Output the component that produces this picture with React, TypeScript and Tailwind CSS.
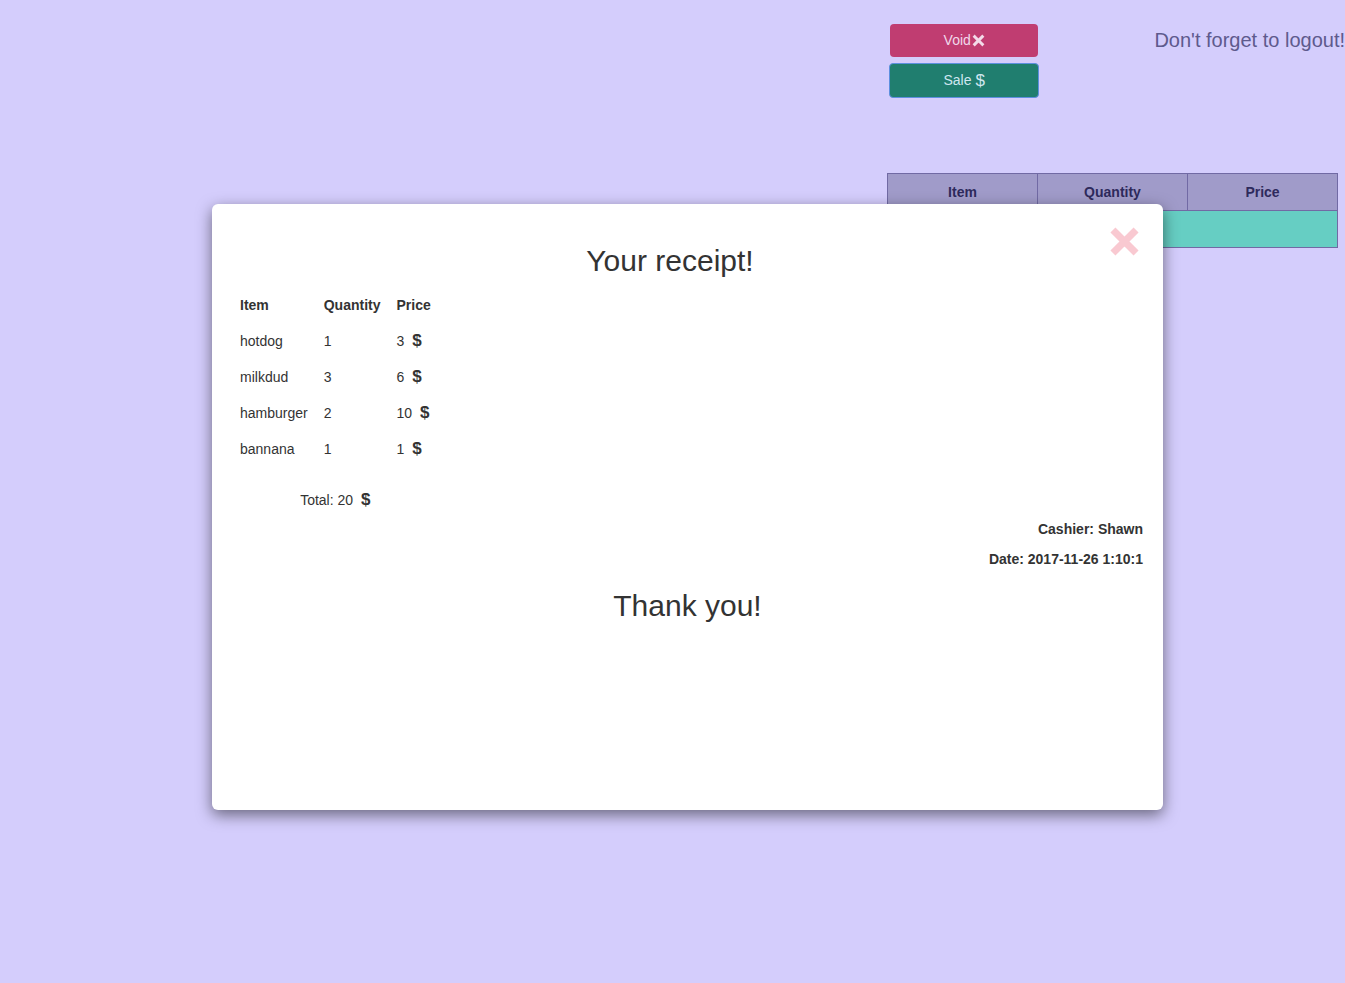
import React from 'react';

const items = [
  { name: 'hotdog', qty: 1, price: 3 },
  { name: 'milkdud', qty: 3, price: 6 },
  { name: 'hamburger', qty: 2, price: 10 },
  { name: 'bannana', qty: 1, price: 1 },
];

const Cross: React.FC<{ className?: string }> = ({ className }) => (
  <svg viewBox="0 0 24 24" className={className} fill="none">
    <path d="M5 5 L19 19 M19 5 L5 19" stroke="currentColor" strokeWidth="5.5" strokeLinecap="square" />
  </svg>
);

const Dollar: React.FC = () => (
  <span className="ml-[8px] inline-block text-[17px] leading-none font-semibold">$</span>
);

const App: React.FC = () => {
  const total = items.reduce((s, i) => s + i.price, 0);

  return (
    <div
      className="relative min-h-[983px] w-full overflow-hidden bg-[#d4cdfc] text-[14px] text-[#333]"
      style={{ fontFamily: '"Liberation Sans", Arial, sans-serif' }}
    >
      {/* top controls */}
      <div className="flex pt-[24px]">
        <div className="ml-[890px] flex w-[150px] flex-col gap-[6px]">
          <button className="flex h-[33px] items-center justify-center rounded-[4px] bg-[#c03d71] text-[#f0d8ea]">
            Void
            <Cross className="ml-[1px] h-[13px] w-[13px] text-[#f3dbe9]" />
          </button>
          <button className="-mx-[1px] flex h-[35px] items-center justify-center rounded-[4px] border border-[#5d8fe0] bg-[#207e6f] text-[#cfe6f0]">
            Sale<span className="ml-[4px] text-[17px] leading-none">$</span>
          </button>
        </div>
        <div className="ml-[116px] mt-[1px] whitespace-nowrap text-[20px] text-[#5e5a8d]">
          Don't forget to logout!
        </div>
      </div>

      {/* order table */}
      <table className="ml-[887px] mt-[75px] w-[451px] border-collapse">
        <thead>
          <tr className="bg-[#a09bc9] text-[#2e2a5c]">
            <th className="h-[37px] w-1/3 border border-[#716aa4] font-bold">Item</th>
            <th className="h-[37px] w-1/3 border border-[#716aa4] font-bold">Quantity</th>
            <th className="h-[37px] w-1/3 border border-[#716aa4] font-bold">Price</th>
          </tr>
        </thead>
        <tbody>
          <tr className="bg-[#66cec3]">
            <td className="h-[37px] border border-[#716aa4]" colSpan={3}></td>
          </tr>
        </tbody>
      </table>

      {/* receipt modal */}
      <div className="absolute left-[212px] top-[204px] h-[606px] w-[951px] rounded-[6px] bg-white px-[20px] pb-[20px] pt-[20px] shadow-[0_5px_15px_rgba(0,0,0,0.5)]">
        <div className="flex items-start">
          <h3 className="mb-[10px] mt-[20px] flex-1 text-center text-[30px] leading-[33px]">Your receipt!</h3>
          <button className="mt-[2px] flex w-[35px] justify-start pl-[1px] text-[#f9c9d1]">
            <Cross className="h-[31px] w-[31px]" />
          </button>
        </div>

        <div className="inline-block">
          <table className="border-collapse">
            <thead>
              <tr>
                <th className="px-[8px] py-[8px] text-left font-bold leading-[20px]">Item</th>
                <th className="px-[8px] py-[8px] text-left font-bold leading-[20px]">Quantity</th>
                <th className="px-[8px] py-[8px] text-left font-bold leading-[20px]">Price</th>
              </tr>
            </thead>
            <tbody>
              {items.map(i => (
                <tr key={i.name}>
                  <td className="px-[8px] py-[8px] leading-[20px]">{i.name}</td>
                  <td className="px-[8px] py-[8px] leading-[20px]">{i.qty}</td>
                  <td className="px-[8px] py-[8px] leading-[20px]">
                    {i.price}
                    <Dollar />
                  </td>
                </tr>
              ))}
            </tbody>
          </table>
          <p className="mt-[23px] text-center leading-[20px]">
            Total: {total}
            <Dollar />
          </p>
        </div>

        <p className="mt-[8px] text-right font-bold leading-[20px]">Cashier: Shawn</p>
        <p className="mt-[10px] text-right font-bold leading-[20px]">Date: 2017-11-26 1:10:1</p>
        <h3 className="mt-[20px] text-center text-[30px] leading-[33px]">Thank you!</h3>
      </div>
    </div>
  );
};

export default App;
